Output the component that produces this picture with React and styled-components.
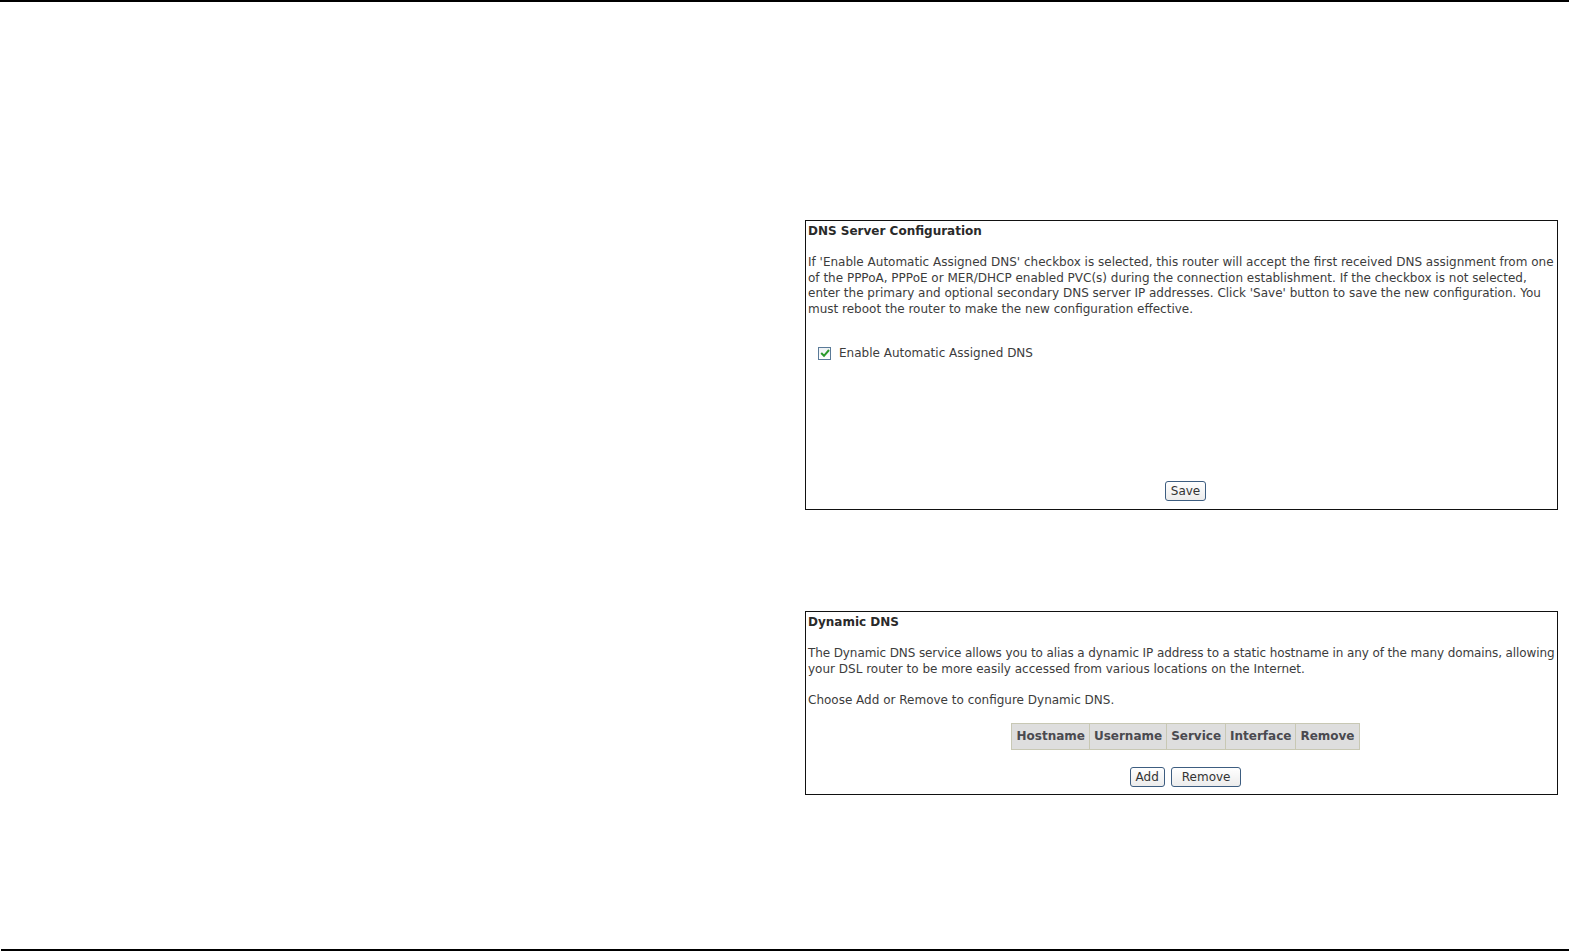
import React from "react";
import styled, { createGlobalStyle } from "styled-components";

const Global = createGlobalStyle`
  html, body { margin: 0; padding: 0; background: #fff; }
  body { font-family: "DejaVu Sans", Verdana, sans-serif; }
`;

const Page = styled.div`
  height: 952px;
  display: flex;
  flex-direction: column;
  overflow: hidden;
`;

const Rule = styled.div`
  height: ${(p) => p.$h}px;
  background: #000;
  margin-left: ${(p) => p.$left || 0}px;
  flex-shrink: 0;
`;

const Content = styled.div`
  flex: 1;
  display: flex;
  flex-direction: column;
  gap: 101px;
  padding: 218px 0 0 805px;
`;

const Box = styled.section`
  box-sizing: border-box;
  width: 753px;
  height: ${(p) => p.$h}px;
  border: 1px solid #111;
  padding: 2px 2px ${(p) => p.$pb}px 2px;
  display: flex;
  flex-direction: column;
  font-size: 12px;
  color: #3c3c3c;
`;

const Title = styled.div`
  font-weight: bold;
  line-height: 16px;
  color: #2a2a2a;
`;

const Para = styled.p`
  margin: ${(p) => p.$mt}px 0 0 0;
  line-height: 15.5px;
  white-space: nowrap;
`;

const Tight = styled.span`
  letter-spacing: -0.1px;
`;

const CheckRow = styled.label`
  display: flex;
  align-items: center;
  gap: 8px;
  margin: 28px 0 0 10px;
  line-height: 16px;
`;

const CheckBox = styled.span`
  box-sizing: border-box;
  width: 13px;
  height: 13px;
  border: 1px solid #5a7a98;
  background: linear-gradient(#eef1f4, #ffffff);
  display: inline-flex;
  align-items: center;
  justify-content: center;
`;

const Center = styled.div`
  display: flex;
  justify-content: center;
  gap: 6px;
  margin-top: ${(p) => (p.$auto ? "auto" : `${p.$mt}px`)};
  padding-left: 8px;
`;

const Button = styled.button`
  font-family: inherit;
  font-size: 12px;
  color: #333;
  height: 20px;
  padding: 0 ${(p) => p.$px}px;
  border: 1px solid #3d5d80;
  border-radius: 3px;
  background: linear-gradient(#ffffff, #ececec);
  line-height: 18px;
`;

const Table = styled.table`
  border-collapse: collapse;
  border: 1px solid #c8c8b4;
  background: #dedede;
`;

const Th = styled.th`
  border: 1px solid #c8c8b4;
  padding: 0 4px;
  height: 25px;
  font-size: 12px;
  font-weight: bold;
  color: #4a4a50;
  font-family: "DejaVu Sans", Verdana, sans-serif;
`;

const Check = () => (
  <svg width="10" height="10" viewBox="0 0 10 10">
    <path d="M1.2 5 L4 7.8 L9 2" fill="none" stroke="#2a9a2a" strokeWidth="2" />
  </svg>
);

export default function App() {
  return (
    <Page>
      <Global />
      <Rule $h={2} />
      <Content>
        <Box $h={290} $pb={8}>
          <Title>DNS Server Configuration</Title>
          <Para $mt={16}>
            If 'Enable Automatic Assigned DNS' checkbox is selected, this router will accept the first received DNS assignment from one
            <br />
            of the PPPoA, PPPoE or MER/DHCP enabled PVC(s) during the connection establishment. If the checkbox is not selected,
            <br />
            enter the primary and optional secondary DNS server IP addresses. Click 'Save' button to save the new configuration. You
            <br />
            must reboot the router to make the new configuration effective.
          </Para>
          <CheckRow>
            <CheckBox>
              <Check />
            </CheckBox>
            Enable Automatic Assigned DNS
          </CheckRow>
          <Center $auto>
            <Button $px={5}>Save</Button>
          </Center>
        </Box>
        <Box $h={184} $pb={6}>
          <Title>Dynamic DNS</Title>
          <Para $mt={16}>
            <Tight>
              The Dynamic DNS service allows you to alias a dynamic IP address to a static hostname in any of the many domains, allowing
            </Tight>
            <br />
            your DSL router to be more easily accessed from various locations on the Internet.
          </Para>
          <Para $mt={16}>Choose Add or Remove to configure Dynamic DNS.</Para>
          <Center $mt={14}>
            <Table>
              <thead>
                <tr>
                  <Th>Hostname</Th>
                  <Th>Username</Th>
                  <Th>Service</Th>
                  <Th>Interface</Th>
                  <Th>Remove</Th>
                </tr>
              </thead>
            </Table>
          </Center>
          <Center $mt={17}>
            <Button $px={5}>Add</Button>
            <Button $px={10}>Remove</Button>
          </Center>
        </Box>
      </Content>
      <Rule $h={2} $left={1} />
      <div style={{ height: 1 }} />
    </Page>
  );
}
